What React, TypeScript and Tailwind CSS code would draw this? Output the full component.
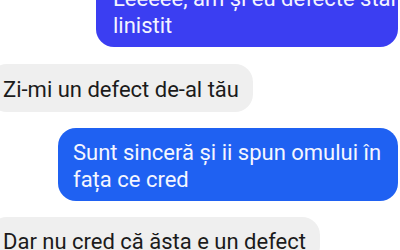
import React from "react";

export default function App() {
  return (
    <div
      className="w-[400px] h-[250px] overflow-hidden bg-white"
      style={{ fontFamily: "Roboto, 'Noto Sans', sans-serif" }}
    >
      <div className="flex flex-col mt-[-26px] text-[22px] leading-[27px]">
        <div className="flex justify-end pr-[2px]">
          <div className="w-[302px] rounded-[18px] bg-[#3b3ef2] text-[#f4f4ff] pl-[17px] pr-[10px] pt-[11px] pb-[8px] whitespace-nowrap">
            <div>Leeeee, am și eu defecte stai</div>
            <div>linistit</div>
          </div>
        </div>
        <div className="flex mt-[17px] ml-[-11px]">
          <div className="w-[264px] rounded-[18px] bg-[#efefef] text-[#1b1b1b] pl-[14px] pt-[12px] pb-[9px] whitespace-nowrap">
            Zi-mi un defect de-al tău
          </div>
        </div>
        <div className="flex justify-end pr-[2px] mt-4">
          <div className="w-[340px] rounded-[18px] bg-[#1f61f2] text-[#f4f6ff] pl-[15px] pr-[8px] pt-[11px] pb-[8px] whitespace-nowrap">
            <div>Sunt sinceră și ii spun omului în</div>
            <div>fața ce cred</div>
          </div>
        </div>
        <div className="flex mt-4 ml-[-11px]">
          <div className="w-[331px] rounded-[18px] bg-[#efefef] text-[#1b1b1b] pl-[14px] pt-[11px] pb-[9px] whitespace-nowrap">
            Dar nu cred că ăsta e un defect
          </div>
        </div>
      </div>
    </div>
  );
}
